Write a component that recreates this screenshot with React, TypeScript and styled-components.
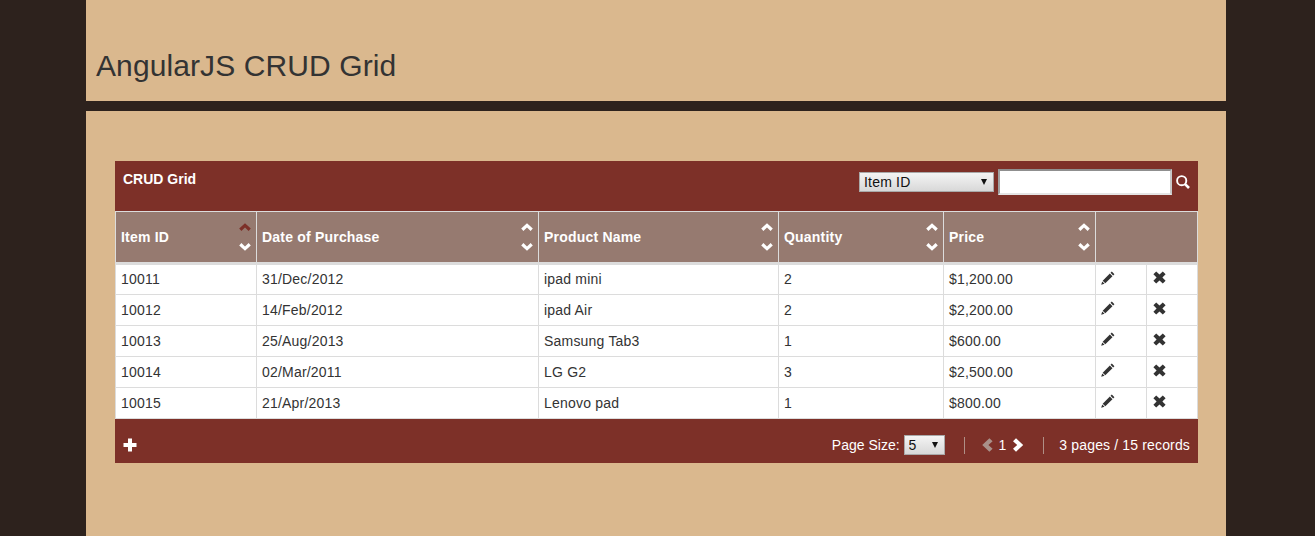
import React from 'react';
import styled, { createGlobalStyle } from 'styled-components';

type Row = { id: string; date: string; name: string; qty: string; price: string };

const ROWS: Row[] = [
  { id: '10011', date: '31/Dec/2012', name: 'ipad mini', qty: '2', price: '$1,200.00' },
  { id: '10012', date: '14/Feb/2012', name: 'ipad Air', qty: '2', price: '$2,200.00' },
  { id: '10013', date: '25/Aug/2013', name: 'Samsung Tab3', qty: '1', price: '$600.00' },
  { id: '10014', date: '02/Mar/2011', name: 'LG G2', qty: '3', price: '$2,500.00' },
  { id: '10015', date: '21/Apr/2013', name: 'Lenovo pad', qty: '1', price: '$800.00' },
];

const COLUMNS = [
  { label: 'Item ID', width: 141, active: true },
  { label: 'Date of Purchase', width: 282 },
  { label: 'Product Name', width: 240 },
  { label: 'Quantity', width: 165 },
  { label: 'Price', width: 152 },
];

const MAROON = '#7d3028';
const TAN = '#dab88e';
const INK = '#333';
const RULE = '#dcdcdc';

const GlobalStyle = createGlobalStyle`
  html, body {
    margin: 0;
    height: 100%;
    background: #2d221d;
    font-family: "Liberation Sans", Arial, sans-serif;
    overflow: hidden;
  }
`;

const Page = styled.div`
  width: 1140px;
  margin-left: 86px;
  display: flex;
  flex-direction: column;
  gap: 10px;
`;

const Header = styled.header`
  height: 101px;
  box-sizing: border-box;
  background: ${TAN};
  padding: 48px 10px 0;
`;

const Title = styled.h1`
  margin: 0;
  font-size: 30px;
  line-height: 36px;
  font-weight: 400;
  letter-spacing: 0.1px;
  color: ${INK};
`;

const Content = styled.main`
  height: 425px;
  box-sizing: border-box;
  background: ${TAN};
  padding: 50px 28px 0 29px;
`;

const Grid = styled.section`
  width: 1083px;
`;

const Toolbar = styled.div`
  height: 50px;
  box-sizing: border-box;
  background: ${MAROON};
  display: flex;
  justify-content: space-between;
  padding: 10px 8px 0;
  color: #fff;
`;

const GridTitle = styled.div`
  font-size: 14px;
  line-height: 17px;
  font-weight: 700;
`;

const Search = styled.div`
  display: flex;
  align-items: flex-start;
`;

const SelectWrap = styled.div<{ $w: number; $top?: number }>`
  position: relative;
  width: ${(p) => p.$w}px;
  height: 20px;
  margin-top: ${(p) => p.$top ?? 0}px;
`;

const Select = styled.select`
  appearance: none;
  width: 100%;
  height: 100%;
  box-sizing: border-box;
  margin: 0;
  padding: 0 0 0 4px;
  border: 1px solid #a9a9a9;
  border-radius: 0;
  background: linear-gradient(#f4f4f4, #d8d8d8);
  color: #111;
  font: 14px "Liberation Sans", Arial, sans-serif;
  letter-spacing: 0.2px;
`;

const Caret = styled.span`
  position: absolute;
  right: 7px;
  top: 7px;
  width: 0;
  height: 0;
  border-left: 3.5px solid transparent;
  border-right: 3.5px solid transparent;
  border-top: 6px solid #111;
  pointer-events: none;
`;

const SearchInput = styled.input`
  width: 174px;
  height: 26px;
  box-sizing: border-box;
  margin: -2px 0 0 4px;
  padding: 0;
  border: 2px solid;
  border-color: #8f8f8f #c8c8c8 #e4e4e4 #a0a0a0;
  background: #fff;
`;

const SearchIcon = styled.svg`
  width: 14px;
  height: 14px;
  margin: 4px 0 0 4px;
  display: block;
`;

const Table = styled.table`
  width: 1083px;
  table-layout: fixed;
  border-collapse: collapse;
  font-size: 14px;
  letter-spacing: 0.2px;
  background: #fff;
  color: ${INK};
  border: 1px solid ${RULE};
`;

const HeadCell = styled.th`
  position: relative;
  height: 52px;
  box-sizing: border-box;
  padding: 0 5px;
  background: #967a70;
  color: #fff;
  text-align: left;
  font-weight: 700;
  border: 1px solid ${RULE};
  border-bottom-width: 3px;
`;

const SortIcons = styled.span`
  position: absolute;
  right: 5px;
  top: 11px;
  display: flex;
  flex-direction: column;
  gap: 10px;
`;

const Chevron = styled.svg<{ $color?: string }>`
  width: 12px;
  height: 9px;
  display: block;
  fill: ${(p) => p.$color ?? '#fff'};
`;

const Cell = styled.td`
  height: 31px;
  box-sizing: border-box;
  padding: 0 5px;
  border: 1px solid ${RULE};
  white-space: nowrap;

  tr:first-child > & {
    padding-bottom: 2px;
  }
`;

const IconCell = styled(Cell)<{ $pad: number }>`
  padding: 0 ${(p) => p.$pad}px 4px;

  tr:first-child > & {
    padding-bottom: 4px;
  }
`;

const ActionIcon = styled.svg<{ $size: number }>`
  width: ${(p) => p.$size}px;
  height: ${(p) => p.$size}px;
  display: block;
  fill: ${INK};
`;

const Footer = styled.div`
  height: 44px;
  box-sizing: border-box;
  background: ${MAROON};
  color: #fff;
  font-size: 14px;
  display: flex;
  align-items: center;
  justify-content: space-between;
  padding: 8px 8px 0;
`;

const PlusIcon = styled.svg`
  width: 14px;
  height: 14px;
  display: block;
  fill: #fff;
`;

const Pager = styled.div`
  display: flex;
  align-items: center;
`;

const PageSize = styled.div`
  display: flex;
  align-items: center;
  gap: 4px;
`;

const PageNav = styled.div`
  display: flex;
  align-items: center;
  gap: 4px;
  margin: 0 15px 0 19px;
  padding: 0 19px 0 17px;
  height: 17px;
  border-left: 1px solid #b08f86;
  border-right: 1px solid #b08f86;
`;

const PageCount = styled.span`
  letter-spacing: 0.15px;
`;

const NavIcon = styled.svg<{ $dim?: boolean }>`
  width: 12px;
  height: 14px;
  display: block;
  fill: ${(p) => (p.$dim ? '#a99089' : '#fff')};
  margin: 0 ${(p) => (p.$dim ? 1 : 0)}px 0 ${(p) => (p.$dim ? 0 : 2)}px;
`;

const ChevronUp = ({ color }: { color?: string }) => (
  <Chevron $color={color} viewBox="0 0 12 9">
    <path d="M6 0.3 L11.8 5.6 L9.6 8 L6 4.6 L2.4 8 L0.2 5.6 Z" />
  </Chevron>
);

const ChevronDown = () => (
  <Chevron viewBox="0 0 12 9">
    <path d="M6 8.7 L11.8 3.4 L9.6 1 L6 4.4 L2.4 1 L0.2 3.4 Z" />
  </Chevron>
);

const Pencil = () => (
  <ActionIcon $size={14} viewBox="0 0 15 15">
    <path d="M11.6 0.6 L14.4 3.4 L13 4.8 L10.2 2 Z M9.5 2.7 L12.3 5.5 L4.6 13.2 L1.8 10.4 Z M1.3 11.2 L3.8 13.7 L0.2 14.8 Z" />
  </ActionIcon>
);

const Cross = () => (
  <ActionIcon $size={13} viewBox="0 0 13 13">
    <path d="M3.2 0.4 L6.5 3.6 L9.8 0.4 L12.6 3.2 L9.4 6.5 L12.6 9.8 L9.8 12.6 L6.5 9.4 L3.2 12.6 L0.4 9.8 L3.6 6.5 L0.4 3.2 Z" />
  </ActionIcon>
);

export default function App() {
  return (
    <>
      <GlobalStyle />
      <Page>
        <Header>
          <Title>AngularJS CRUD Grid</Title>
        </Header>
        <Content>
          <Grid>
            <Toolbar>
              <GridTitle>CRUD Grid</GridTitle>
              <Search>
                <SelectWrap $w={135} $top={1}>
                  <Select defaultValue="Item ID">
                    <option>Item ID</option>
                    <option>Date of Purchase</option>
                    <option>Product Name</option>
                  </Select>
                  <Caret />
                </SelectWrap>
                <SearchInput type="text" />
                <SearchIcon viewBox="0 0 14 14">
                  <circle cx="5.7" cy="5.7" r="4.6" fill="none" stroke="#fff" strokeWidth="1.9" />
                  <path d="M8.8 8.8 L13 13" stroke="#fff" strokeWidth="2.6" />
                </SearchIcon>
              </Search>
            </Toolbar>
            <Table>
              <colgroup>
                {COLUMNS.map((c) => (
                  <col key={c.label} width={c.width} />
                ))}
                <col width={51} />
                <col width={51} />
              </colgroup>
              <thead>
                <tr>
                  {COLUMNS.map((c) => (
                    <HeadCell key={c.label}>
                      {c.label}
                      <SortIcons>
                        <ChevronUp color={c.active ? MAROON : undefined} />
                        <ChevronDown />
                      </SortIcons>
                    </HeadCell>
                  ))}
                  <HeadCell colSpan={2} />
                </tr>
              </thead>
              <tbody>
                {ROWS.map((r) => (
                  <tr key={r.id}>
                    <Cell>{r.id}</Cell>
                    <Cell>{r.date}</Cell>
                    <Cell>{r.name}</Cell>
                    <Cell>{r.qty}</Cell>
                    <Cell>{r.price}</Cell>
                    <IconCell $pad={5}>
                      <Pencil />
                    </IconCell>
                    <IconCell $pad={6}>
                      <Cross />
                    </IconCell>
                  </tr>
                ))}
              </tbody>
            </Table>
            <Footer>
              <PlusIcon viewBox="0 0 14 14">
                <path d="M5 0.5 H9 V5 H13.5 V9 H9 V13.5 H5 V9 H0.5 V5 H5 Z" />
              </PlusIcon>
              <Pager>
                <PageSize>
                  Page Size:
                  <SelectWrap $w={41}>
                    <Select defaultValue="5">
                      <option>5</option>
                      <option>10</option>
                    </Select>
                    <Caret />
                  </SelectWrap>
                </PageSize>
                <PageNav>
                  <NavIcon $dim viewBox="0 0 12 14">
                    <path d="M7.4 0.2 L10.6 3.2 L6.4 7 L10.6 10.8 L7.4 13.8 L0.2 7 Z" />
                  </NavIcon>
                  1
                  <NavIcon viewBox="0 0 12 14">
                    <path d="M4 0.2 L1 3.2 L5.2 7 L1 10.8 L4 13.8 L11.2 7 Z" />
                  </NavIcon>
                </PageNav>
                <PageCount>3 pages / 15 records</PageCount>
              </Pager>
            </Footer>
          </Grid>
        </Content>
      </Page>
    </>
  );
}
